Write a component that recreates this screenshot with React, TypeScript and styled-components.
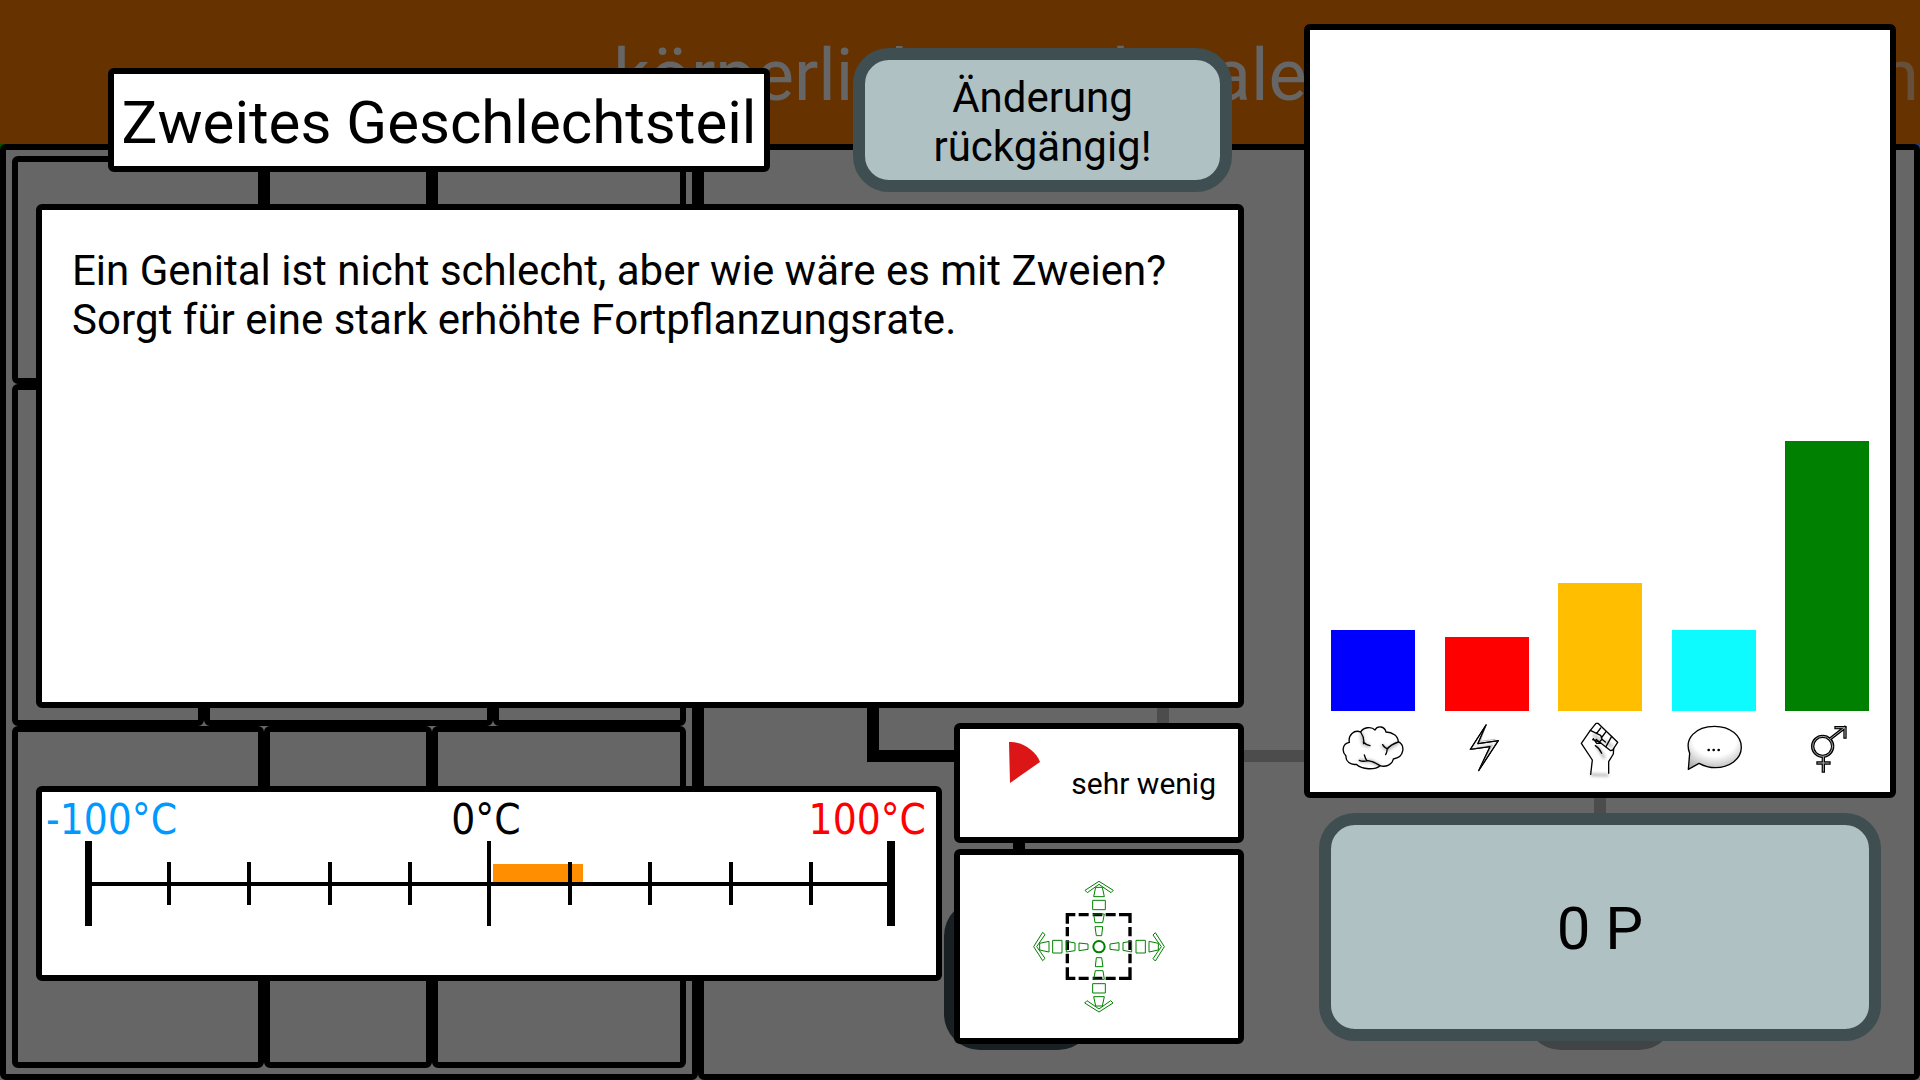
import React from "react";
import styled, { createGlobalStyle } from "styled-components";

const GlobalStyle = createGlobalStyle`
  *, *::before, *::after { box-sizing: border-box; }
  body {
    margin: 0;
    background: #666;
    color: #000;
    font-family: Roboto, "Liberation Sans", sans-serif;
    font-kerning: none;
  }
  h1, h2, p { margin: 0; font-weight: 400; }
`;

const Stage = styled.div`
  display: grid;
  grid-template-columns: minmax(0, 1fr);
  min-height: 100vh;
`;

/* ---------- dimmed board behind the dialog ---------- */

const Board = styled.div`
  grid-area: 1 / 1;
  display: flex;
  flex-direction: column;
`;

const CategoryBar = styled.header`
  display: grid;
  grid-template-columns: 1fr auto 1fr;
  align-items: center;
  height: 144px;
  padding-top: 8px;
  background: #663300;
  color: #666;
  font-size: 72px;
  line-height: 84px;
  overflow: hidden;
`;

const CategoryName = styled.span`
  grid-column: 2;
`;

const NextCategory = styled.span`
  text-align: right;
  padding-right: 1px;
  color: #66503a;
`;

const BoardBody = styled.div`
  flex: 1;
  display: grid;
  grid-template-columns: minmax(0, 698fr) minmax(0, 1222fr);
  background: linear-gradient(to right, #004d00 50%, #1a3f80 50%) top / 100% 6px no-repeat;
`;

const Region = styled.div<{ $padding: number }>`
  display: flex;
  flex-direction: column;
  border: 6px solid #000;
  border-radius: 6px;
  padding: ${(p) => p.$padding}px;
  background: #666;
`;

const SlotRow = styled.div<{ $grow: number; $columns: string }>`
  flex: ${(p) => p.$grow} 1 0;
  display: grid;
  grid-template-columns: ${(p) => p.$columns};
`;

const Slot = styled.div`
  border: 6px solid #000;
  border-radius: 6px;
`;

const SkillTree = styled.svg`
  display: block;
  width: 1210px;
  height: 918px;
  max-width: 100%;
`;

/* ---------- dialog ---------- */

const Dialog = styled.main`
  grid-area: 1 / 1;
  position: relative;
  display: grid;
  grid-template-columns: minmax(0, 1208fr) minmax(0, 592fr);
  column-gap: 60px;
  align-items: start;
  padding: 24px 24px 36px 36px;
`;

const Column = styled.div<{ $gap: number }>`
  display: flex;
  flex-direction: column;
  gap: ${(p) => p.$gap}px;
  min-width: 0;
`;

const Panel = styled.section`
  border: 6px solid #000;
  border-radius: 6px;
  background: #fff;
`;

const DialogHeader = styled.div`
  display: flex;
  align-items: center;
  justify-content: space-between;
  padding: 24px 12px 0 72px;
  margin-bottom: -3px;
`;

const TitlePanel = styled(Panel)`
  display: flex;
  align-items: center;
  justify-content: center;
  width: 662px;
  height: 104px;
  padding-top: 6px;
`;

const Title = styled.h1`
  font-size: 60px;
  line-height: 70px;
  white-space: nowrap;
`;

const PillButton = styled.button<{ $size: "small" | "large" }>`
  border: 12px solid #3f4e51;
  border-radius: 36px;
  background: #b0c1c4;
  color: #000;
  font-family: inherit;
  padding: 4px 0 0;
  cursor: pointer;
  width: ${(p) => (p.$size === "large" ? "auto" : "379px")};
  height: ${(p) => (p.$size === "large" ? "228px" : "144px")};
  margin: ${(p) => (p.$size === "large" ? "0 15px" : "0")};
  font-size: ${(p) => (p.$size === "large" ? "60px" : "42px")};
  line-height: ${(p) => (p.$size === "large" ? "70px" : "49px")};
`;

const Description = styled(Panel)`
  min-height: 504px;
  padding: 36px 30px;
  font-size: 42px;
  line-height: 49px;
`;

const Facts = styled.div`
  display: grid;
  grid-template-columns: minmax(0, 906fr) minmax(0, 290fr);
  column-gap: 12px;
  align-items: center;
`;

const TemperaturePanel = styled(Panel)`
  height: 195px;
  padding: 4px 0 0;
`;

const TemperatureLabels = styled.div`
  display: grid;
  grid-template-columns: 1fr auto 1fr;
  padding: 0 10px 0 4px;
  font-family: "DejaVu Sans Condensed", "DejaVu Sans", sans-serif;
  font-size: 42px;
  line-height: 48px;
`;

const TemperatureLabel = styled.span<{ $color: string; $align?: string }>`
  color: ${(p) => p.$color};
  text-align: ${(p) => p.$align ?? "left"};
`;

const Scale = styled.svg`
  display: block;
  width: 100%;
  overflow: visible;
`;

const AmountPanel = styled(Panel)`
  display: flex;
  align-items: flex-start;
  justify-content: space-between;
  height: 120px;
  padding: 12px 22px 0 48px;
`;

const AmountText = styled.span`
  padding-top: 25px;
  font-size: 30px;
  line-height: 35px;
`;

const MovePanel = styled(Panel)`
  display: flex;
  align-items: center;
  justify-content: center;
  height: 195px;
`;

const ChartPanel = styled(Panel)`
  display: flex;
  align-items: flex-end;
  justify-content: space-between;
  height: 774px;
  padding: 0 21px 11px;
`;

const BarColumn = styled.div`
  display: flex;
  flex-direction: column;
  gap: 4px;
  width: 84px;
`;

const Bar = styled.div<{ $color: string }>`
  background: ${(p) => p.$color};
`;

const BarIcon = styled.svg`
  display: block;
  width: 84px;
  height: 66px;
  fill: none;
  stroke: #000;
  stroke-width: 4;
  stroke-linejoin: round;
  stroke-linecap: round;
`;

function BrainIcon() {
  return (
    <BarIcon viewBox="63 45 252 198" role="img" aria-label="Intelligenz">
      <defs>
        <filter id="soft" x="-50%" y="-50%" width="200%" height="200%">
          <feGaussianBlur stdDeviation="5" />
        </filter>
      </defs>
      <g stroke="#bbb" strokeWidth="10" filter="url(#soft)">
        <path d="M155 102 160 132 176 138M218 138 232 148 264 128M150 182 184 184 206 196" />
      </g>
      <path d="M118 127C114 105 132 88 152 96C160 82 184 78 195 90C202 76 224 78 228 96C248 96 264 108 265 125C285 135 285 172 250 177C247 193 228 203 210 197C196 210 156 210 139 193C122 196 106 184 108 168C95 156 96 131 118 127Z" />
      <path d="M152 96C160 108 163 118 161 131M160 126C165 132 172 135 180 137M265 126C254 130 240 136 231 147M218 134C223 142 228 146 234 146M231 147C232 154 230 159 227 164M148 181C158 186 164 184 174 182C190 184 200 190 210 197M163 165C165 172 167 178 171 182" />
    </BarIcon>
  );
}

function BoltIcon() {
  return (
    <BarIcon viewBox="403 45 252 198" role="img" aria-label="Energie">
      <path d="M526 75 479 148 538 140 504 212 563 122 502 131Z" fill="#f0f0f0" />
      <path d="M526 75 509 124 553 118M479 148 545 135 504 212" stroke="#999" strokeWidth="2" />
      <path d="M526 75 479 148 538 140 504 212 563 122 502 131Z" strokeWidth="3" />
    </BarIcon>
  );
}

function FistIcon() {
  return (
    <BarIcon viewBox="744 45 252 198" role="img" aria-label="Kraft">
      <defs>
        <filter id="softFist" x="-50%" y="-50%" width="200%" height="200%">
          <feGaussianBlur stdDeviation="4" />
        </filter>
      </defs>
      <g stroke="#bbb" strokeWidth="9" filter="url(#softFist)">
        <path d="M852 105 870 122M862 140 882 172M846 224 892 226M885 125 905 138" />
      </g>
      <path d="M842 223 847 180 814 130 841 91 858 70 864 70 923 127 908 150 902 152 858 118" />
      <path d="M911 145 910 162 896 185 896 220" />
      <path d="M841 91 872 106 876 118 868 126 848 119M850 116 860 130 874 130M856 137C866 143 871 151 875 160M872 84 860 100M888 95 874 114M905 109 888 140M876 118 886 126" />
    </BarIcon>
  );
}

function SpeechIcon() {
  return (
    <BarIcon viewBox="244 45 252 198" role="img" aria-label="Kommunikation">
      <defs>
        <radialGradient id="bubble" cx="0.5" cy="0.28" r="0.75">
          <stop offset="0.55" stopColor="#fff" />
          <stop offset="1" stopColor="#b4b4b4" />
        </radialGradient>
      </defs>
      <path
        d="M297 160C280 116 314 79 372 79C420 79 452 108 452 142C452 178 416 203 374 203C355 203 338 197 325 190L293 208Z"
        fill="url(#bubble)"
      />
      <g fill="#000" stroke="none">
        <circle cx="354" cy="150" r="4" />
        <circle cx="369" cy="150" r="4" />
        <circle cx="384" cy="150" r="4" />
      </g>
    </BarIcon>
  );
}

function GenderIcon() {
  const shape = (
    <>
      <circle cx="698" cy="139" r="30" />
      <path d="M720 117 764 83M738 83H765V111M700 170V213M684 189H717" />
    </>
  );
  return (
    <BarIcon viewBox="585 45 252 198" role="img" aria-label="Fortpflanzung">
      <g strokeWidth="10" strokeLinecap="square" strokeLinejoin="miter">{shape}</g>
      <g stroke="#aaa" strokeWidth="3" strokeLinecap="square" strokeLinejoin="miter">{shape}</g>
    </BarIcon>
  );
}

function TemperatureScale() {
  const ticks = [1, 2, 3, 4, 6, 7, 8, 9];
  return (
    <Scale viewBox="0 52 894 131" role="img" aria-label="0 bis 22 Grad">
      <rect x="451" y="72" width="90" height="19" fill="#ff8f00" />
      <rect x="50" y="90" width="795" height="4" />
      <rect x="43" y="49" width="7" height="85" />
      <rect x="845" y="49" width="8" height="85" />
      <rect x="445" y="49" width="4" height="85" />
      {ticks.map((t) => (
        <rect key={t} x={Math.round(45 + t * 80.2)} y="70" width="4" height="43" />
      ))}
    </Scale>
  );
}

function MoveIcon() {
  const arm = (
    <>
      <path d="M228 52H248L254 80H222ZM219 91H257V119H219ZM222 132H254L249 158H226ZM226 170H249L246 197H230Z" />
      <path d="M238 34 281 61 274 68 238 43 203 68 196 61Z" />
    </>
  );
  return (
    <svg width="160" height="150" viewBox="-2 6 480 450" fill="none" role="img" aria-label="Ausbreitung">
      <path
        d="M143 161V134H167M177 134H207M219 134H248M258 134H288M298 134H331V159M331 171V199M331 211V240M331 251V280M331 292V325H298M288 325H258M248 325H219M207 325H177M167 325H143V292M143 280V251M143 240V211M143 199V171"
        stroke="#000"
        strokeWidth="10"
      />
      <g stroke="#008000" strokeWidth="3">
        {[0, 90, 180, 270].map((angle) => (
          <g key={angle} transform={`rotate(${angle} 238 230)`}>{arm}</g>
        ))}
        <circle cx="238" cy="230" r="17" strokeWidth="6" />
      </g>
    </svg>
  );
}

const stats = [
  { color: "#0000ff", height: 81, Icon: BrainIcon },
  { color: "#ff0000", height: 74, Icon: BoltIcon },
  { color: "#ffbf00", height: 128, Icon: FistIcon },
  { color: "#0dfbff", height: 81, Icon: SpeechIcon },
  { color: "#008000", height: 270, Icon: GenderIcon },
];

const wideSlots = "252fr 168fr 254fr";
const evenSlots = "192fr 289fr 193fr";

function SlotGroup({ grow, columns }: { grow: number; columns: string }) {
  return (
    <SlotRow $grow={grow} $columns={columns}>
      <Slot />
      <Slot />
      <Slot />
    </SlotRow>
  );
}

export default function App() {
  return (
    <>
      <GlobalStyle />
      <Stage>
        <Board>
          <CategoryBar>
            <CategoryName>körperliche Merkmale</CategoryName>
            <NextCategory>n</NextCategory>
          </CategoryBar>
          <BoardBody>
            <Region $padding={6}>
              <SlotGroup grow={228} columns={wideSlots} />
              <SlotGroup grow={342} columns={evenSlots} />
              <SlotGroup grow={342} columns={wideSlots} />
            </Region>
            <Region $padding={0}>
              <SkillTree viewBox="704 150 1210 918" preserveAspectRatio="xMinYMin" aria-hidden="true">
                <g fill="none" strokeWidth="12">
                  <path d="M1163 600V756H1600V920" stroke="#4c4c4c" />
                  <path d="M873 600V756H1019V920" stroke="#000" />
                </g>
                <rect x="944" y="900" width="150" height="150" rx="36" fill="#192023" />
                <rect x="1525" y="900" width="150" height="150" rx="36" fill="#404444" />
              </SkillTree>
            </Region>
          </BoardBody>
        </Board>

        <Dialog>
          <Column $gap={15}>
            <DialogHeader>
              <TitlePanel>
                <Title>Zweites Geschlechtsteil</Title>
              </TitlePanel>
              <PillButton $size="small" type="button">
                Änderung
                <br />
                rückgängig!
              </PillButton>
            </DialogHeader>
            <Description>
              <p>
                Ein Genital ist nicht schlecht, aber wie wäre es mit Zweien?
                <br />
                Sorgt für eine stark erhöhte Fortpflanzungsrate.
              </p>
            </Description>
            <Facts>
              <TemperaturePanel>
                <TemperatureLabels>
                  <TemperatureLabel $color="#0099ff">-100°C</TemperatureLabel>
                  <TemperatureLabel $color="#000">0°C</TemperatureLabel>
                  <TemperatureLabel $color="#ff0000" $align="right">100°C</TemperatureLabel>
                </TemperatureLabels>
                <TemperatureScale />
              </TemperaturePanel>
              <Column $gap={6}>
                <AmountPanel>
                  <svg width="34" height="44" viewBox="0 0 34 44" aria-hidden="true">
                    <path d="M1 1C12 0 28 9 32 21L2 42Z" fill="#dc1616" />
                  </svg>
                  <AmountText>sehr wenig</AmountText>
                </AmountPanel>
                <MovePanel>
                  <MoveIcon />
                </MovePanel>
              </Column>
            </Facts>
          </Column>

          <Column $gap={15}>
            <ChartPanel>
              {stats.map(({ color, height, Icon }) => (
                <BarColumn key={color}>
                  <Bar $color={color} style={{ height }} />
                  <Icon />
                </BarColumn>
              ))}
            </ChartPanel>
            <PillButton $size="large" type="button">0 P</PillButton>
          </Column>
        </Dialog>
      </Stage>
    </>
  );
}
